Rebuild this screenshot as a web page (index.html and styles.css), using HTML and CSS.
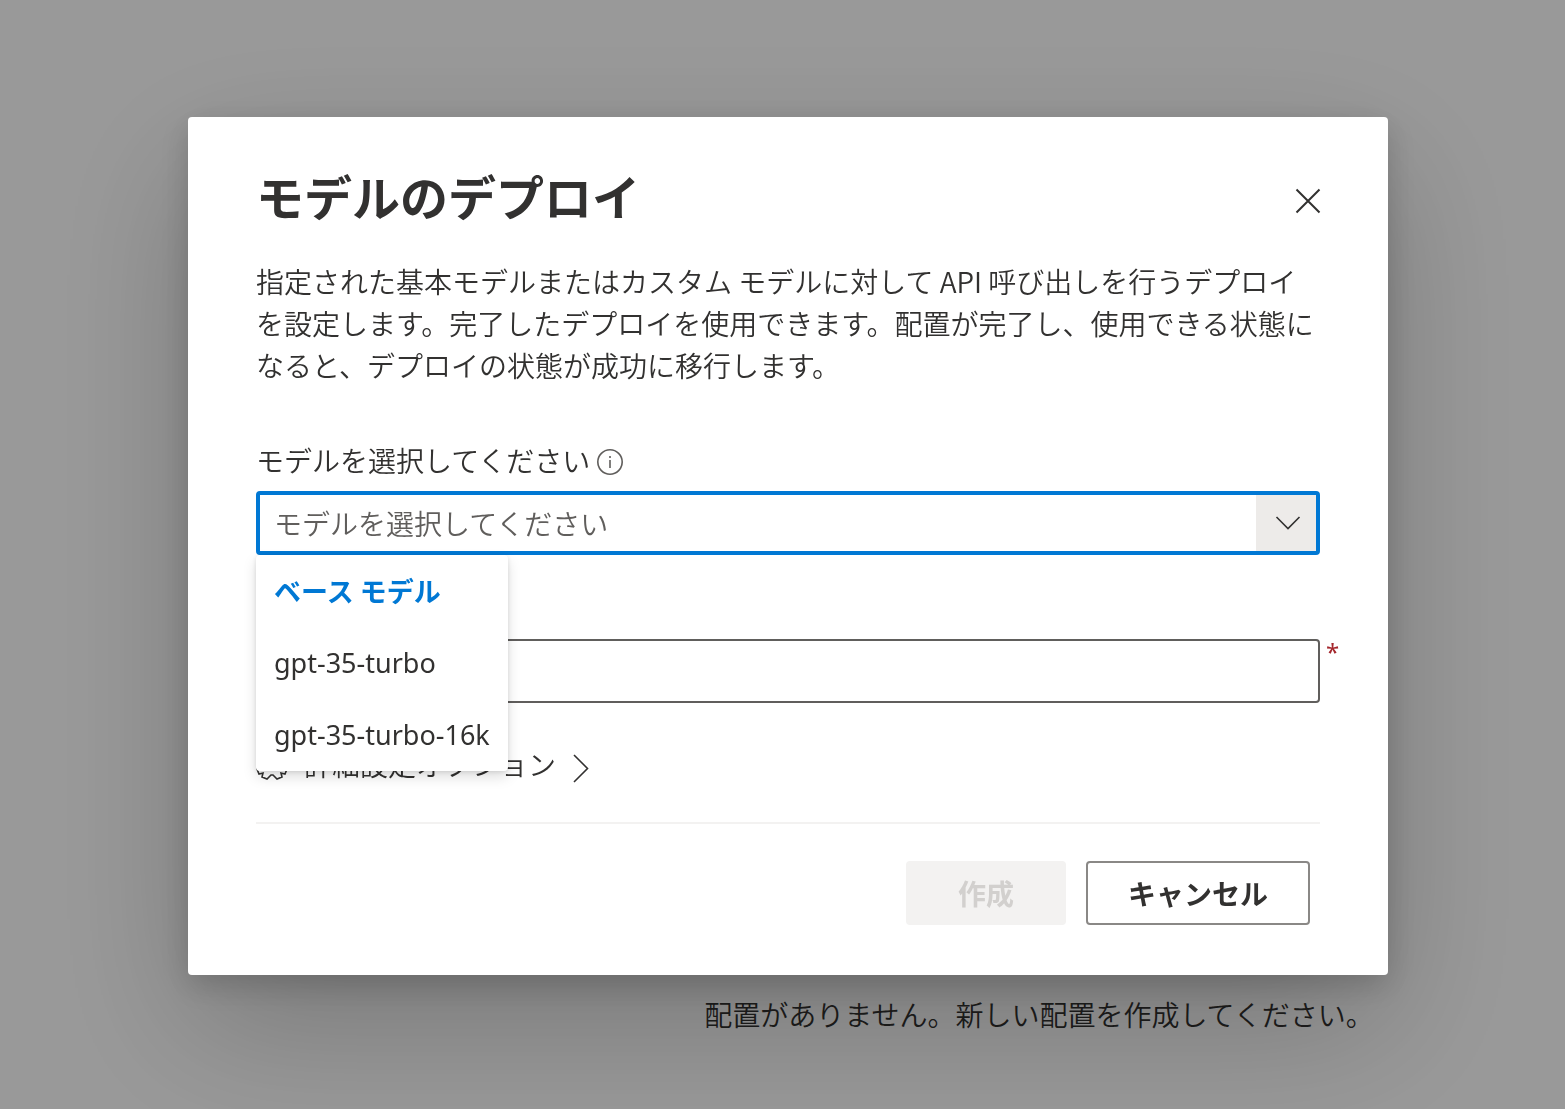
FILE: index.html
```html
<!DOCTYPE html>
<html lang="ja">
<head>
    <meta charset="UTF-8">
    <meta name="viewport" content="width=device-width, initial-scale=1.0">
    <title>モデルのデプロイ</title>
    <link rel="stylesheet" href="styles.css">
</head>
<body>
    <main class="page">
        <p class="empty-message">配置がありません。新しい配置を作成してください。</p>
    </main>
    <div class="overlay">
        <div class="dialog" role="dialog" aria-modal="true" aria-labelledby="dialogTitle">
            <header class="dialog-header">
                <h1 id="dialogTitle">モデルのデプロイ</h1>
                <button type="button" class="close-button" aria-label="閉じる">
                    <svg width="26" height="26" viewBox="0 0 26 26"><path d="M1.5 1.5l23 23M24.5 1.5l-23 23"/></svg>
                </button>
            </header>
            <p class="description">指定された基本モデルまたはカスタム モデルに対して API 呼び出しを行うデプロイを設定します。完了したデプロイを使用できます。配置が完了し、使用できる状態になると、デプロイの状態が成功に移行します。</p>
            <form>
                <div class="field">
                    <div class="label-row">
                        <label for="model">モデルを選択してください</label>
                        <svg class="info-icon" width="28" height="28" viewBox="0 0 28 28"><circle cx="14" cy="14" r="12.2"/><path d="M14 12v8M14 8v2"/></svg>
                    </div>
                    <div class="combo">
                        <input type="text" id="model" role="combobox" aria-expanded="true" aria-controls="modelList" placeholder="モデルを選択してください">
                        <button type="button" class="combo-button" aria-label="モデルの一覧">
                            <svg width="26" height="16" viewBox="0 0 26 16"><path d="M1.5 2L13 13.5 24.5 2"/></svg>
                        </button>
                        <div class="menu" id="modelList">
                            <div class="menu-header">ベース モデル</div>
                            <button type="button" class="menu-item">gpt-35-turbo</button>
                            <button type="button" class="menu-item">gpt-35-turbo-16k</button>
                        </div>
                    </div>
                </div>
                <div class="required">
                    <input type="text" class="text-input" aria-label="デプロイ名" required>
                    <span class="asterisk">*</span>
                </div>
                <button type="button" class="advanced">
                    <svg width="32" height="32" viewBox="-16 -16 32 32"><path d="M-9 9L-10 13-5 15-1 11H1L5 15 10 13 9 9 13 10 15 5 11 1V-1L15-5 13-10 9-9 10-13 5-15 1-11H-1L-5-15-10-13-9-9-13-10-15-5-11-1V1L-15 5-13 10z"/><circle r="5"/></svg>
                    <span>詳細設定オプション</span>
                    <svg class="chevron" width="18" height="30" viewBox="0 0 18 30"><path d="M2 2l13.5 13.5L2 29"/></svg>
                </button>
                <footer class="actions">
                    <button type="submit" class="button create" disabled>作成</button>
                    <button type="button" class="button cancel">キャンセル</button>
                </footer>
            </form>
        </div>
    </div>
</body>
</html>
```

FILE: styles.css
```css
* {
    box-sizing: border-box;
}
body {
    margin: 0;
    font-family: "Noto Sans CJK JP", sans-serif;
    font-size: 28px;
    font-weight: 350;
    line-height: 42px;
    color: #323130;
    background-color: #fff;
}
h1, p {
    margin: 0;
}
input, button {
    font: inherit;
    color: inherit;
    margin: 0;
}
button {
    border: none;
    background: none;
    padding: 0;
    cursor: pointer;
}
svg {
    display: block;
    flex: none;
    fill: none;
    stroke: #323130;
    stroke-width: 2;
}
.page {
    min-height: 100vh;
    display: flex;
    flex-direction: column;
    justify-content: flex-end;
    padding: 0 0 74px 45%;
}
.empty-message {
    white-space: nowrap;
}
.overlay {
    position: fixed;
    inset: 0;
    display: flex;
    align-items: center;
    justify-content: center;
    padding: 0 0 17px 11px;
    background-color: rgba(0, 0, 0, 0.4);
}
.dialog {
    width: 100%;
    max-width: 1200px;
    padding: 46px 68px 50px;
    background-color: #fff;
    border-radius: 4px;
    box-shadow: 0 51px 140px rgba(0, 0, 0, 0.22), 0 10px 32px rgba(0, 0, 0, 0.18);
}
.dialog-header {
    display: flex;
    align-items: center;
    justify-content: space-between;
    margin-bottom: 33px;
}
h1 {
    font-size: 48px;
    line-height: 64px;
    font-weight: 600;
}
.close-button {
    padding: 12px 0 0 8px;
    margin-right: -1px;
}
.description {
    margin-bottom: 53px;
}
.label-row {
    display: flex;
    align-items: center;
    gap: 6px;
    height: 42px;
    margin-bottom: 10px;
}
.info-icon {
    margin-top: 4px;
    stroke: #605e5c;
    stroke-width: 1.6;
}
.combo {
    position: relative;
    display: flex;
    height: 64px;
    border: 4px solid #0078d4;
    border-radius: 4px;
}
.combo input {
    flex: 1;
    min-width: 0;
    padding: 0 14px;
    border: none;
    outline: none;
}
.combo input::placeholder {
    color: #605e5c;
    opacity: 1;
}
.combo-button {
    display: flex;
    align-items: center;
    justify-content: center;
    width: 60px;
    padding-left: 4px;
    background-color: #edebe9;
}
.combo-button svg {
    stroke-width: 1.6;
}
.menu {
    position: absolute;
    top: 60px;
    left: -4px;
    background-color: #fff;
    border-radius: 4px;
    box-shadow: 0 6px 14px rgba(0, 0, 0, 0.13), 0 1px 4px rgba(0, 0, 0, 0.11);
}
.menu-header, .menu-item {
    display: block;
    padding: 0 18px;
    font-size: 27px;
    line-height: 72px;
    white-space: nowrap;
}
.menu-header {
    color: #0078d4;
    font-weight: 600;
}
.menu-item {
    width: 100%;
    font-family: "Noto Sans", "Noto Sans CJK JP", sans-serif;
    font-weight: 400;
    text-align: left;
}
.field {
    margin-bottom: 84px;
}
.required {
    display: flex;
    gap: 6px;
    margin-right: -20px;
}
.text-input {
    flex: 1;
    min-width: 0;
    height: 64px;
    padding: 0 16px;
    border: 2px solid #605e5c;
    border-radius: 4px;
}
.asterisk {
    width: 14px;
    font-family: "Noto Sans", sans-serif;
    font-size: 24px;
    font-weight: 400;
    line-height: 26px;
    color: #a4262c;
}
.advanced {
    display: flex;
    align-items: center;
    gap: 16px;
    margin-top: 40px;
}
.advanced svg {
    stroke-width: 1.6;
}
.advanced .chevron {
    margin-top: 8px;
}
.actions {
    display: flex;
    justify-content: flex-end;
    gap: 20px;
    margin-top: 37px;
    padding: 37px 10px 0 0;
    border-top: 2px solid #f3f2f1;
}
.button {
    height: 64px;
    min-width: 160px;
    padding: 0 40px;
    border-radius: 4px;
    font-weight: 600;
}
.create {
    background-color: #f3f2f1;
    color: #d2d0ce;
    cursor: default;
}
.cancel {
    border: 2px solid #8a8886;
}
```
